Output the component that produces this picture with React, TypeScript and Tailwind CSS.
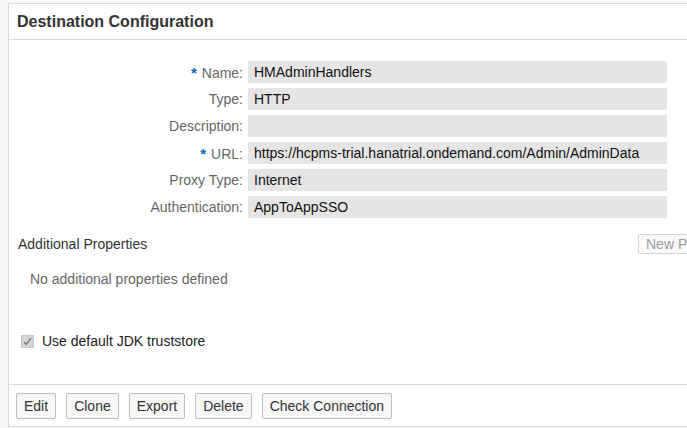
import React from "react";

const rows: { label: string; value: string; required?: boolean }[] = [
  { label: "Name:", value: "HMAdminHandlers", required: true },
  { label: "Type:", value: "HTTP" },
  { label: "Description:", value: "" },
  { label: "URL:", value: "https://hcpms-trial.hanatrial.ondemand.com/Admin/AdminData", required: true },
  { label: "Proxy Type:", value: "Internet" },
  { label: "Authentication:", value: "AppToAppSSO" },
];

function Btn({ children }: { children: React.ReactNode }) {
  return (
    <button className="h-[26px] px-[7px] border border-[#bfbfbf] rounded-[2px] bg-[#f7f7f7] text-[14px] text-[#333] leading-none">
      {children}
    </button>
  );
}

export default function App() {
  return (
    <div
      className="w-[687px] h-[428px] overflow-hidden bg-[#f7f7f7] pl-[8px] pt-[3px]"
      style={{ fontFamily: '"Liberation Sans", Arial, sans-serif' }}
    >
      <div className="w-[711px] border border-[#d9d9d9] bg-white">
        <div className="h-[36px] border-b border-[#d9d9d9] flex items-center pl-[8px]">
          <span className="text-[16px] font-bold text-[#333]">Destination Configuration</span>
        </div>
        <div className="h-[344px] flex flex-col">
          <div className="pt-[21px] flex flex-col gap-[5px]">
            {rows.map((r) => (
              <div key={r.label} className="flex items-center gap-[5px]">
                <div className="w-[234px] text-right text-[14px] text-[#666] leading-none">
                  {r.required && <span className="text-[#0a6ab6] font-bold text-[15px] mr-[5px]">*</span>}
                  {r.label}
                </div>
                <div className="w-[419px] h-[22px] bg-[#e5e5e5] flex items-center pl-[6px] text-[14px] text-[#111] whitespace-nowrap">
                  {r.value}
                </div>
              </div>
            ))}
          </div>
          <div className="mt-[16px] h-[20px] flex items-center justify-between pl-[9px]">
            <span className="text-[14px] text-[#333]">Additional Properties</span>
            <div className="w-[80px] h-[20px] border border-[#d4d4d4] rounded-[2px] bg-[#fafafa] flex items-center pl-[7px] text-[14px] text-[#999] whitespace-nowrap">
              New Property
            </div>
          </div>
          <div className="mt-[17px] h-[16px] flex items-center pl-[21px] text-[14px] text-[#666]">
            No additional properties defined
          </div>
          <div className="mt-[46px] h-[16px] flex items-center pl-[12px] gap-[8px]">
            <div className="w-[13px] h-[13px] bg-[#d6d6d6] border border-[#c8c8c8] flex items-center justify-center">
              <svg width="11" height="11" viewBox="0 0 11 11">
                <path d="M2 6 L4.3 8.5 L9 2" fill="none" stroke="#7a7a7a" strokeWidth="1.4" />
              </svg>
            </div>
            <span className="text-[14px] text-[#222]">Use default JDK truststore</span>
          </div>
        </div>
        <div className="border-t border-[#d9d9d9] pt-[8px] pb-[7px] pl-[7px] flex gap-[10px]">
          <Btn>Edit</Btn>
          <Btn>Clone</Btn>
          <Btn>Export</Btn>
          <Btn>Delete</Btn>
          <Btn>Check Connection</Btn>
        </div>
      </div>
    </div>
  );
}
